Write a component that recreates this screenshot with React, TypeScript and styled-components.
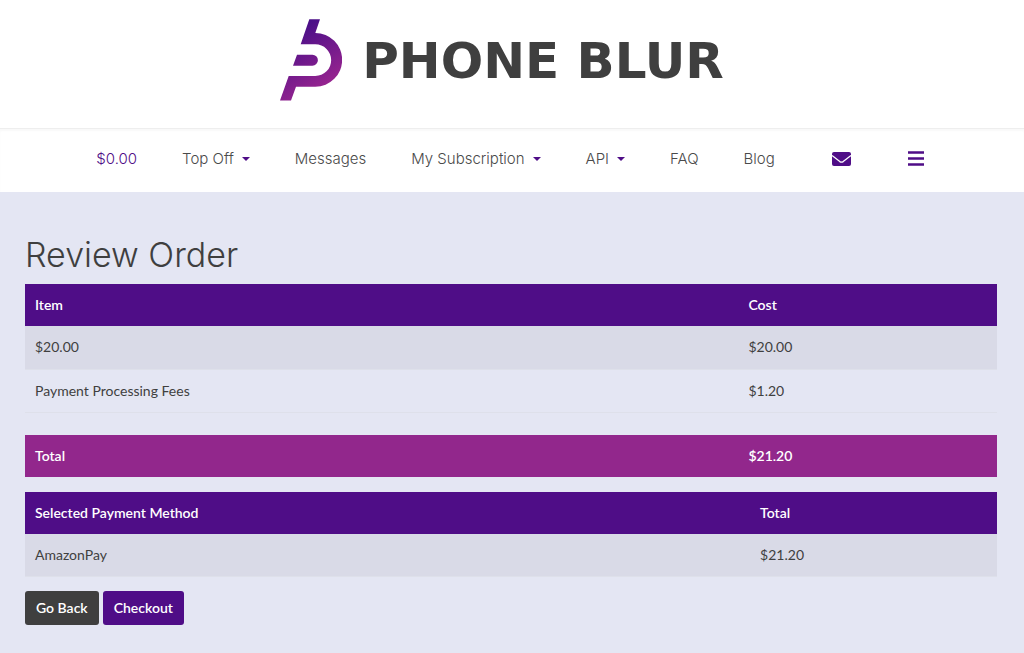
import React from "react";
import styled, { createGlobalStyle } from "styled-components";

const purple = "#4f0d87";
const magenta = "#92278c";
const charcoal = "#3f3f3f";

const GlobalStyle = createGlobalStyle`
  *, *::before, *::after { box-sizing: border-box; }
  body {
    margin: 0;
    min-height: 100vh;
    background: #e4e6f3;
    color: ${charcoal};
    font-family: Lato, "Liberation Sans", sans-serif;
    font-size: 14px;
    line-height: 20px;
  }
`;

const Banner = styled.header`
  display: flex;
  justify-content: center;
  height: 128px;
  padding: 19px 20px 0 0;
  background: #fff;
`;

const Brand = styled.a`
  display: flex;
  gap: 20px;
  height: 82px;
  align-items: center;
  color: ${charcoal};
  text-decoration: none;
`;

const Wordmark = styled.span`
  padding-top: 2px;
  font-family: "DejaVu Sans", sans-serif;
  font-size: 50px;
  font-weight: 700;
  line-height: 56px;
  white-space: nowrap;
`;

const NavBar = styled.nav`
  display: flex;
  justify-content: center;
  align-items: center;
  gap: 45px;
  height: 64px;
  padding: 0 4px 4px 0;
  background: #fff;
  border-top: 1px solid #eee;
  box-shadow: inset 0 2px 2px #f9f9f9;
  font-family: Inter, sans-serif;
  font-size: 15px;
  font-weight: 300;
`;

const NavLink = styled.a<{ $accent?: boolean }>`
  color: ${(p) => (p.$accent ? purple : "#4a4a4a")};
  text-decoration: none;
  white-space: nowrap;
`;

const NavMenu = styled.button`
  display: flex;
  align-items: center;
  gap: 8px;
  padding: 0;
  border: 0;
  background: none;
  color: #4a4a4a;
  font: inherit;
  white-space: nowrap;

  &::after {
    content: "";
    border: 4px solid transparent;
    border-top-color: ${purple};
    border-bottom: 0;
  }
`;

const IconButton = styled.button`
  display: flex;
  padding: 0 0 0 12px;
  border: 0;
  background: none;
  color: ${purple};
`;

const Content = styled.main`
  padding: 40px 27px 24px 25px;
`;

const Title = styled.h1`
  margin: 0 0 6px;
  font-family: Inter, sans-serif;
  font-size: 34px;
  font-weight: 300;
  line-height: 46px;
`;

const Table = styled.table<{ $gap: number }>`
  width: 100%;
  margin-bottom: ${(p) => p.$gap}px;
  border-collapse: collapse;
  table-layout: fixed;
  text-align: left;
`;

const HeadCell = styled.th<{ $width?: string; $tone?: string }>`
  width: ${(p) => p.$width ?? "auto"};
  height: 42px;
  padding: 0 10px;
  background: ${(p) => p.$tone ?? purple};
  color: #fff;
  font-weight: 600;
`;

const Row = styled.tr<{ $striped?: boolean }>`
  background: ${(p) => (p.$striped ? "#d9dae7" : "transparent")};
  border-bottom: 1px solid #dee0ea;
`;

const Cell = styled.td`
  height: 43px;
  padding: 0 10px;
`;

const Actions = styled.div`
  display: flex;
  gap: 4px;
`;

const Button = styled.button<{ $tone: string }>`
  height: 34px;
  padding: 0 11px;
  border: 0;
  border-radius: 3px;
  background: ${(p) => p.$tone};
  color: #fff;
  font: inherit;
  font-weight: 600;
`;

const Logo = () => (
  <svg width="62" height="82" viewBox="0 0 62 82" aria-hidden="true">
    <defs>
      <linearGradient id="brand" gradientUnits="userSpaceOnUse" x1="18" y1="10" x2="52" y2="62">
        <stop offset="0" stopColor="#4a0f88" />
        <stop offset="1" stopColor="#96248f" />
      </linearGradient>
    </defs>
    <g fill="url(#brand)">
      <path d="M29.3 .3H40L35.3 14A26.8 26.8 0 0 1 35.3 67.7H16L11 81.6H0L8.7 57H35.3A15.8 15.8 0 0 0 35.3 25.3H20.7Z" />
      <path d="M17 35.7H32.4A5.5 5.5 0 0 1 32.4 46.7H13Z" />
    </g>
  </svg>
);

export default function App() {
  return (
    <>
      <GlobalStyle />
      <Banner>
        <Brand href="#">
          <Logo />
          <Wordmark>PHONE BLUR</Wordmark>
        </Brand>
      </Banner>
      <NavBar>
        <NavLink href="#" $accent>$0.00</NavLink>
        <NavMenu>Top Off</NavMenu>
        <NavLink href="#">Messages</NavLink>
        <NavMenu>My Subscription</NavMenu>
        <NavMenu>API</NavMenu>
        <NavLink href="#">FAQ</NavLink>
        <NavLink href="#">Blog</NavLink>
        <IconButton aria-label="Inbox">
          <svg width="19" height="14" viewBox="0 0 19 14">
            <rect width="19" height="14" rx="2" fill="currentColor" />
            <path d="M0 3.4L7.8 9.6Q9.5 10.8 11.2 9.6L19 3.4" fill="none" stroke="#fff" strokeWidth="1.3" />
          </svg>
        </IconButton>
        <IconButton aria-label="Menu">
          <svg width="16" height="16" viewBox="0 0 16 16">
            <path d="M0 1.5H16M0 7.5H16M0 13.5H16" stroke="currentColor" strokeWidth="2.4" />
          </svg>
        </IconButton>
      </NavBar>
      <Content>
        <Title>Review Order</Title>
        <Table $gap={22}>
          <thead>
            <tr>
              <HeadCell $width="73.4%">Item</HeadCell>
              <HeadCell>Cost</HeadCell>
            </tr>
          </thead>
          <tbody>
            <Row $striped>
              <Cell>$20.00</Cell>
              <Cell>$20.00</Cell>
            </Row>
            <Row>
              <Cell>Payment Processing Fees</Cell>
              <Cell>$1.20</Cell>
            </Row>
          </tbody>
        </Table>
        <Table $gap={15}>
          <tbody>
            <tr>
              <HeadCell $width="73.4%" $tone={magenta}>Total</HeadCell>
              <HeadCell $tone={magenta}>$21.20</HeadCell>
            </tr>
          </tbody>
        </Table>
        <Table $gap={14}>
          <thead>
            <tr>
              <HeadCell $width="74.6%">Selected Payment Method</HeadCell>
              <HeadCell>Total</HeadCell>
            </tr>
          </thead>
          <tbody>
            <Row $striped>
              <Cell>AmazonPay</Cell>
              <Cell>$21.20</Cell>
            </Row>
          </tbody>
        </Table>
        <Actions>
          <Button $tone={charcoal}>Go Back</Button>
          <Button $tone={purple}>Checkout</Button>
        </Actions>
      </Content>
    </>
  );
}
